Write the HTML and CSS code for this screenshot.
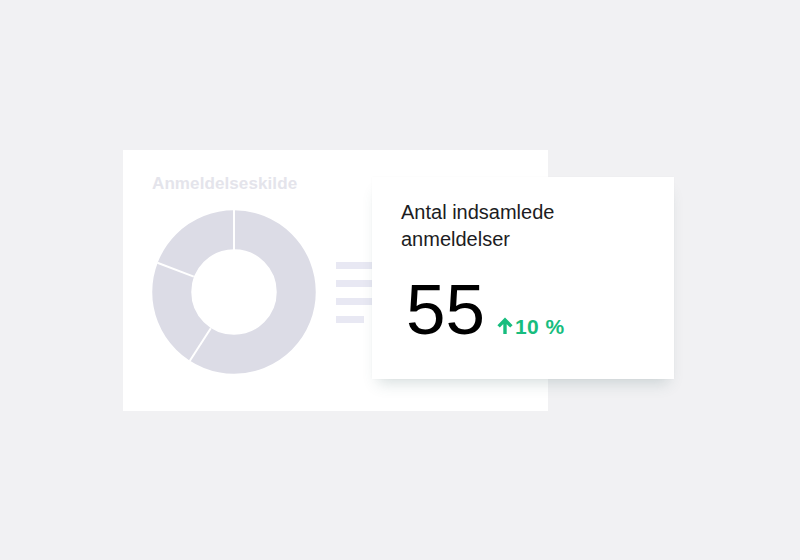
FILE: index.html
```html
<!DOCTYPE html>
<html lang="da">
<head>
<meta charset="UTF-8">
<meta name="viewport" content="width=device-width, initial-scale=1.0">
<title>Anmeldelser</title>
<link rel="stylesheet" href="styles.css">
</head>
<body>
    <div class="stage">
        <div class="source-card">
            <h2 class="source-title">Anmeldelseskilde</h2>
            <div class="source-body">
                <svg class="donut" width="164" height="164" viewBox="0 0 164 164">
                    <circle cx="82" cy="82" r="62.25" fill="none" stroke="#dcdce6" stroke-width="39"/>
                    <line x1="82" y1="40" x2="82" y2="0" stroke="#fff" stroke-width="2"/>
                    <line x1="58.8" y1="118.2" x2="37.7" y2="151" stroke="#fff" stroke-width="2"/>
                    <line x1="41.8" y1="66.6" x2="5.4" y2="52.7" stroke="#fff" stroke-width="2"/>
                </svg>
                <div class="legend">
                    <span class="legend-bar"></span>
                    <span class="legend-bar"></span>
                    <span class="legend-bar"></span>
                    <span class="legend-bar short"></span>
                </div>
            </div>

            <div class="stat-card">
                <h3 class="stat-title">Antal indsamlede anmeldelser</h3>
                <div class="stat-row">
                    <span class="stat-value">55</span>
                    <span class="stat-change"><svg class="arrow" width="16" height="17" viewBox="0 0 16 17">
                            <path d="M8 17V3M1.6 9.4L8 3L14.4 9.4" fill="none" stroke="#17bd7e" stroke-width="3.4"/>
                        </svg>10 %</span>
                </div>
            </div>
        </div>
    </div>
</body>
</html>
```
FILE: styles.css
```css
body {
    margin: 0;
    padding: 0;
    background-color: #f1f1f3;
    font-family: "Liberation Sans", Arial, sans-serif;
}
.stage {
    padding: 150px 0 0 123px;
}
.source-card {
    position: relative;
    width: 425px;
    height: 261px;
    background-color: #ffffff;
    box-sizing: border-box;
    padding: 24px 0 0 29px;
}
.source-title {
    margin: 0;
    font-size: 17px;
    line-height: 20px;
    font-weight: 600;
    letter-spacing: 0.1px;
    color: #e4e4eb;
}
.source-body {
    display: flex;
    align-items: center;
    margin-top: 16px;
}
.donut {
    display: block;
}
.legend {
    display: flex;
    flex-direction: column;
    gap: 11px;
    margin-left: 20px;
}
.legend-bar {
    display: block;
    width: 40px;
    height: 7px;
    background-color: #e8e8f3;
}
.legend-bar.short {
    width: 28px;
}
.stat-card {
    position: absolute;
    left: 249px;
    top: 27px;
    width: 302px;
    height: 202px;
    box-sizing: border-box;
    padding: 22px 0 0 29px;
    background-color: #ffffff;
    box-shadow: 0 10px 14px -6px rgba(70, 105, 105, 0.22), 0 0 2px rgba(0, 0, 0, 0.03);
}
.stat-title {
    margin: 0;
    width: 200px;
    font-size: 20px;
    line-height: 27px;
    font-weight: normal;
    color: #1c1c22;
}
.stat-row {
    display: flex;
    align-items: baseline;
    margin-top: 21px;
}
.stat-value {
    font-size: 71px;
    line-height: 71px;
    color: #000000;
    margin-left: 5px;
}
.stat-change {
    margin-left: 12px;
    font-size: 21px;
    font-weight: bold;
    letter-spacing: 0.4px;
    color: #17bd7e;
}
.arrow {
    vertical-align: baseline;
    margin-right: 2px;
}
```
